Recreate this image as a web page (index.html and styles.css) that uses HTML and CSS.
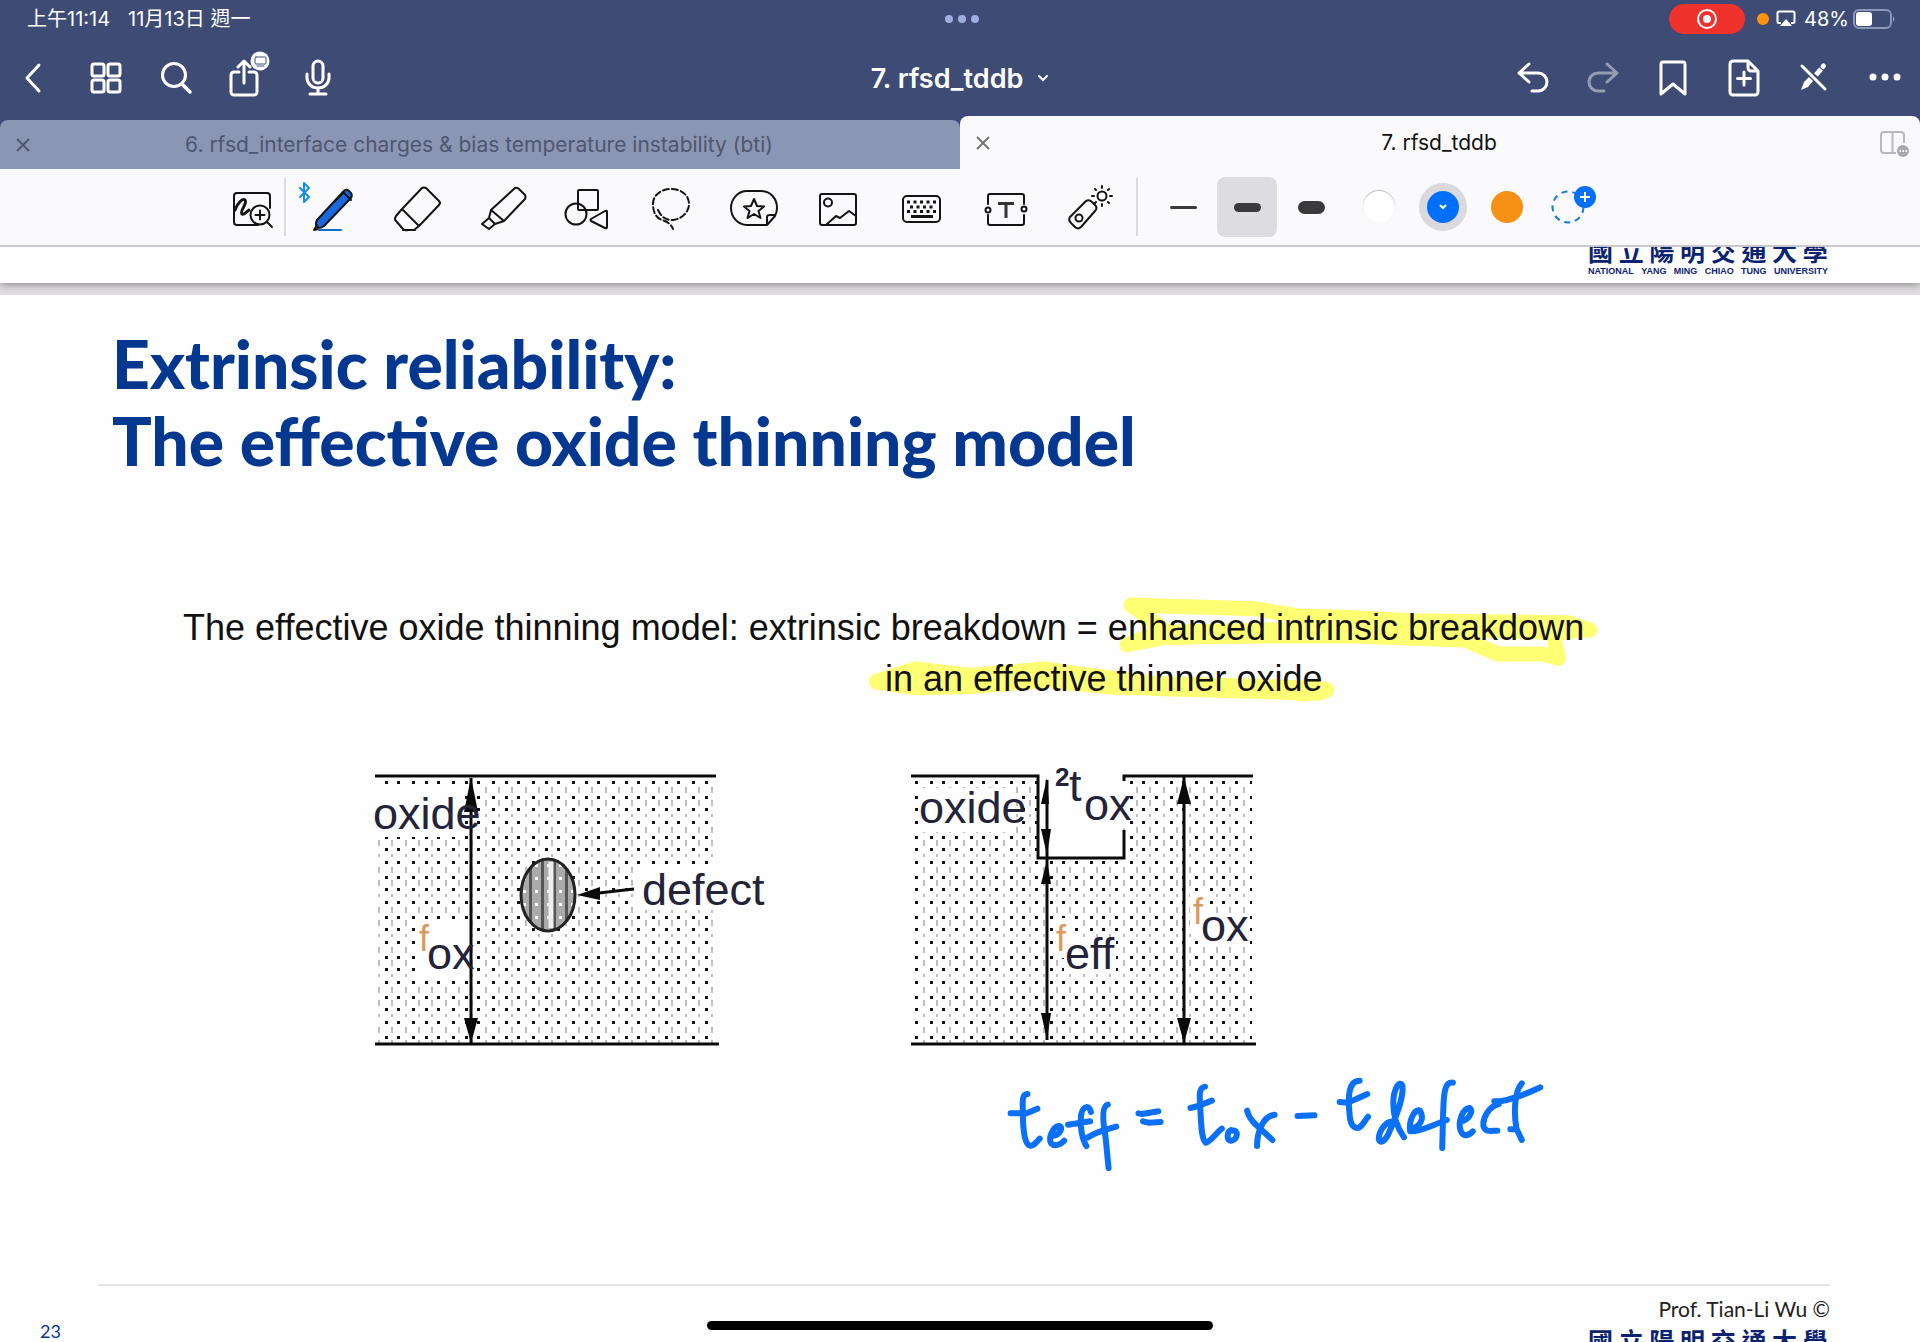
FILE: index.html
```html
<!DOCTYPE html>
<html lang="zh-Hant">
<head>
<meta charset="utf-8">
<title>7. rfsd_tddb</title>
<link rel="stylesheet" href="styles.css">
</head>
<body>
<header class="top">
  <div class="status">
    <div class="status-left"><span>上午11:14</span><span>11月13日 週一</span></div>
    <svg class="dots" width="34" height="10" viewBox="0 0 34 10" fill="#9dafe0"><circle cx="4" cy="5" r="4"/><circle cx="17" cy="5" r="4"/><circle cx="30" cy="5" r="4"/></svg>
    <div class="status-right">
      <span class="rec"><svg width="22" height="22" viewBox="0 0 22 22" fill="none" stroke="#fff" stroke-width="2"><circle cx="11" cy="11" r="9"/><circle cx="11" cy="11" r="4" fill="#fff" stroke="none"/></svg></span>
      <span class="mic-dot"></span>
      <svg width="20" height="18" viewBox="0 0 20 18"><path d="M5 13H3a1.500 1.500 0 0 1-1.500-1.500V3A1.500 1.500 0 0 1 3 1.500h14A1.500 1.500 0 0 1 18.500 3v8.500A1.500 1.500 0 0 1 17 13h-2" fill="none" stroke="#fff" stroke-width="2"/><path d="M10 9l6 7H4z" fill="#fff"/></svg>
      <span class="percent">48%</span>
      <svg width="43" height="20" viewBox="0 0 43 20"><rect x="1" y="1" width="37" height="18" rx="5" fill="none" stroke="#8d98b8" stroke-width="2"/><rect x="3" y="3" width="16" height="14" rx="3" fill="#fff"/><path d="M40 7q3 3 0 6z" fill="#8d98b8"/></svg>
    </div>
  </div>
  <nav class="nav">
    <div class="nav-group">
      <button class="nav-btn" aria-label="Back"><svg width="36" height="40" viewBox="0 0 36 40"><path d="M22 7L10 20l12 13"/></svg></button>
      <button class="nav-btn" aria-label="Pages"><svg width="36" height="40" viewBox="0 0 36 40"><rect x="5" y="6" width="12" height="12" rx="2"/><rect x="21" y="6" width="12" height="12" rx="2"/><rect x="5" y="22" width="12" height="12" rx="2"/><rect x="21" y="22" width="12" height="12" rx="2"/></svg></button>
      <button class="nav-btn" aria-label="Search"><svg width="36" height="40" viewBox="0 0 36 40"><circle cx="17" cy="17" r="11.500"/><path d="M25 26l8 8" stroke-width="3.500"/></svg></button>
      <button class="nav-btn" aria-label="Share"><svg class="share" width="36" height="40" viewBox="0 0 36 40"><path d="M12 14H7a3 3 0 0 0-3 3v17a3 3 0 0 0 3 3h20a3 3 0 0 0 3-3V17a3 3 0 0 0-3-3h-5M17 25V4M11 9l6-6 6 6"/><circle cx="33" cy="3" r="9.500" fill="#fff" stroke="none"/><rect x="28" y="-1" width="11" height="7" rx="1" stroke="#3e4c75" stroke-width="1"/><path d="M30 8h7" stroke="#3e4c75" stroke-width="1"/></svg></button>
      <button class="nav-btn" aria-label="Record"><svg width="36" height="40" viewBox="0 0 36 40"><rect x="16" y="3" width="10" height="22" rx="5"/><path d="M10 16v4a11 10 0 0 0 22 0v-4M21 30v6M13 36h16"/></svg></button>
    </div>
    <button class="doc-title"><span>7. rfsd_tddb</span><svg width="12" height="8" viewBox="0 0 12 8"><path d="M2 2l4 4 4-4" fill="none" stroke="#fff" stroke-width="2" stroke-linecap="round"/></svg></button>
    <div class="nav-group nav-end">
      <button class="nav-btn" aria-label="Undo"><svg width="36" height="40" viewBox="0 0 36 40"><path d="M12 6L2 15l10 9M3 15h18a9 9 0 0 1 0 18h-6"/></svg></button>
      <button class="nav-btn faded" aria-label="Redo"><svg width="36" height="40" viewBox="0 0 36 40"><path d="M20 6l10 9-10 9M29 15H11a9 9 0 0 0 0 18h6"/></svg></button>
      <button class="nav-btn" aria-label="Bookmark"><svg width="36" height="40" viewBox="0 0 36 40"><path d="M4 36V6a2 2 0 0 1 2-2h20a2 2 0 0 1 2 2v30L16 26z"/></svg></button>
      <button class="nav-btn" aria-label="Add page"><svg width="36" height="40" viewBox="0 0 36 40"><path d="M21 3H6a3 3 0 0 0-3 3v28a3 3 0 0 0 3 3h22a3 3 0 0 0 3-3V13zM21 3v7a3 3 0 0 0 3 3h7M17 14v13M10.500 20.500h13"/></svg></button>
      <button class="nav-btn" aria-label="Read only"><svg width="36" height="40" viewBox="0 0 36 40"><path d="M5 8l23 23"/><path d="M4 32l3-8 5-5 4 4-5 6z" fill="#fff" stroke="none"/><path d="M19 17l5-6" stroke-width="5" stroke-linecap="butt"/><path d="M26 8.500l.5-.5" stroke-width="5"/></svg></button>
      <button class="nav-btn" aria-label="More"><svg width="36" height="40" viewBox="0 0 36 40" ><g fill="#fff" stroke="none"><circle cx="6" cy="19" r="3.500"/><circle cx="18" cy="19" r="3.500"/><circle cx="30" cy="19" r="3.500"/></g></svg></button>
    </div>
  </nav>
  <div class="tabs">
    <div class="tab"><button class="close" aria-label="Close tab"><svg width="14" height="14" viewBox="0 0 14 14"><path d="M1 1l12 12M13 1L1 13"/></svg></button><span class="tab-name">6. rfsd_interface charges &amp; bias temperature instability (bti)</span></div>
    <div class="tab active"><button class="close" aria-label="Close tab"><svg width="14" height="14" viewBox="0 0 14 14"><path d="M1 1l12 12M13 1L1 13"/></svg></button><span class="tab-name">7. rfsd_tddb</span>
      <button class="split" aria-label="Split view"><svg width="30" height="26" viewBox="0 0 30 26" fill="none" stroke="#b9b8bd" stroke-width="2"><path d="M16 22H4a3 3 0 0 1-3-3V4a3 3 0 0 1 3-3h17a3 3 0 0 1 3 3v8M12.500 1v21"/><circle cx="23" cy="20" r="6" fill="#a9a8ad" stroke="none"/><path d="M19.500 20h1.500M22.500 20h1.500M25.500 20h1.500" stroke="#fff"/></svg></button></div>
  </div>
</header>
<div class="toolbar">
  <button class="tool first" aria-label="Zoom window"><svg width="48" height="48" viewBox="0 0 48 48"><path d="M30 41H9a3 3 0 0 1-3-3V12a3 3 0 0 1 3-3h30a3 3 0 0 1 3 3v12"/><path d="M7 26c3-8 8-12 10-10 3 3-6 12-3 14 3 1 4-2 7-4" stroke-width="3"/><circle cx="32" cy="31" r="9.500" fill="#faf9fc"/><path d="M39 38l5 5M32 26.500v9M27.500 31h9"/></svg></button>
  <span class="sep"></span>
  <button class="tool" aria-label="Pen"><svg width="48" height="48" viewBox="0 0 48 48"><path d="M-10 4l9 9-5 5V-1l5 5-9 9" stroke="#148cf0"/><path d="M7 36L33 8q3-4 6-1l2 2q2 3-1 6L14 42q-4 3-7 1-2-3 0-7z" fill="#1a67e0" stroke-width="2"/><path d="M33 8l8 8" /><path d="M24 18l9-9M7 41l-3 5 4-1" /><path d="M9 46h22" stroke="#0a72cc"/></svg></button>
  <button class="tool" aria-label="Eraser"><svg width="48" height="48" viewBox="0 0 48 48"><path d="M8 25L28 4q2-1 4 0l13 13q2 2 0 4L25 42zM8 25l-6 7q-2 3 0 5l7 8q2 2 5 1h6l5-4M9 46h12"/></svg></button>
  <button class="tool" aria-label="Highlighter"><svg width="48" height="48" viewBox="0 0 48 48"><path d="M13 26L37 4q2-1 4 1l6 6q1 2 0 4L26 37zM13 26l-2 8 6 6 9-3M11 34l-7 6 7 5 6-5"/></svg></button>
  <button class="tool" aria-label="Shapes"><svg width="48" height="48" viewBox="0 0 48 48"><rect x="16" y="6" width="20" height="20" rx="1"/><circle cx="14" cy="30" r="10.500"/><path d="M43 27q2-1 2 1v15q0 2-2 1L29 37q-1-1 0-2z"/></svg></button>
  <button class="tool" aria-label="Lasso"><svg width="48" height="48" viewBox="0 0 48 48"><path d="M12 26c4 8 8 10 15 10 9-1 16-8 16-16 0-9-8-15-18-15S7 11 7 20c0 8 3 14 9 16 6 2 9 4 11 9" stroke-dasharray="6 3"/></svg></button>
  <button class="tool" aria-label="Stickers"><svg width="48" height="48" viewBox="0 0 48 48"><path d="M37 41H17C8 41 1 33 1 24S8 7 17 7h14c9 0 16 7 16 17 0 4-1 6-2 8l-8 9v-8q0-2 3-2h5"/><path d="M24 15l3 7 7 .5-5.500 4.500 2 7-6.500-4-6.500 4 2-7-5.500-4.500 7-.5z"/></svg></button>
  <button class="tool" aria-label="Image"><svg width="48" height="48" viewBox="0 0 48 48"><rect x="6" y="10" width="36" height="31" rx="2"/><circle cx="14" cy="18.500" r="4"/><path d="M12 41l10-9 4 2 9-7 7 5"/></svg></button>
  <button class="tool" aria-label="Keyboard"><svg width="48" height="48" viewBox="0 0 48 48"><rect x="5" y="12" width="37" height="26" rx="4"/><path d="M9 18h29M9 27.500h29" stroke-width="3" stroke-dasharray="3 3.500" stroke-linecap="butt"/><path d="M12 23h24" stroke-width="3" stroke-dasharray="3 3.500" stroke-linecap="butt"/><path d="M13 32.500h22" stroke-width="3" stroke-linecap="butt"/></svg></button>
  <button class="tool" aria-label="Text"><svg width="48" height="48" viewBox="0 0 48 48"><path d="M6 20v-8q0-2 2-2h32q2 0 2 2v8M6 31v8q0 2 2 2h32q2 0 2-2v-8"/><circle cx="6" cy="26" r="2.500"/><circle cx="42" cy="25" r="2.500"/><path d="M16 19.500h16M24 20v14" stroke-width="3" stroke="#333" stroke-linecap="butt"/></svg></button>
  <button class="tool" aria-label="Laser pointer"><svg width="48" height="48" viewBox="0 0 48 48"><path d="M4 33L20 17q3-2 6 1l3 3q3 3 0 6L15 43q-3 3-6 0l-4-4q-3-3-1-6z"/><circle cx="13" cy="34" r="3.500"/><circle cx="36" cy="12" r="4.500"/><path d="M36 2v2M36 20v2M26 12h2M44 12h2M29 5l1 1M42 18l1 1M43 5l-1 1M30 18l-2 2"/></svg></button>
  <span class="sep second"></span>
  <div class="pens">
    <button class="pen" aria-label="Thin"><span class="stroke thin"></span></button>
    <button class="pen selected" aria-label="Medium"><span class="stroke medium"></span></button>
    <button class="pen" aria-label="Thick"><span class="stroke thick"></span></button>
  </div>
  <div class="colors">
    <button class="pen" aria-label="White"><span class="swatch white"></span></button>
    <button class="pen" aria-label="Blue"><span class="swatch blue"><svg width="10" height="8" viewBox="0 0 10 8"><path d="M2 2l3 3 3-3" fill="none" stroke="#fff" stroke-width="2"/></svg></span></button>
    <button class="pen" aria-label="Orange"><span class="swatch orange"></span></button>
    <button class="pen" aria-label="Add colour"><svg width="50" height="50" viewBox="0 0 50 50" fill="none"><circle cx="22" cy="25" r="15.500" stroke="#0f78dc" stroke-width="2" stroke-dasharray="6 5"/><circle cx="39" cy="15" r="11" fill="#006ffd"/><path d="M39 10v10M34 15h10" stroke="#fff" stroke-width="2"/></svg></button>
  </div>
</div>
<main class="canvas">
  <div class="previous">
    <div class="logo"><span class="logo-zh">國 立 陽 明 交 通 大 學</span><span class="logo-en"><span>NATIONAL</span><span>YANG</span><span>MING</span><span>CHIAO</span><span>TUNG</span><span>UNIVERSITY</span></span></div>
  </div>
  <article class="slide">
    <h1>Extrinsic reliability:<br>The effective oxide thinning model</h1>
    <div class="statement">
      <svg class="marker" width="780" height="130" viewBox="0 0 1568 390" preserveAspectRatio="none" fill="none" stroke="#ffff73" stroke-linecap="round" stroke-linejoin="round">
        <path vector-effect="non-scaling-stroke" stroke-width="15" d="M553 75L800 86L890 108L980 112L1120 122L1430 128L1475 150L1400 155L1412 235L1380 222L1290 222L1225 180L1000 168L820 168L620 172L545 194L620 150L553 75"/>
        <path vector-effect="non-scaling-stroke" stroke-width="20" d="M600 165L900 155M880 130L1430 150M960 145L1220 165"/>
        <path vector-effect="non-scaling-stroke" stroke-width="16" d="M42 305L120 268L230 288L380 268L520 300L640 322L945 330L900 340L820 325L520 320L380 300L230 318L120 322L42 305"/>
        <path vector-effect="non-scaling-stroke" stroke-width="20" d="M120 300L420 285L600 318L930 332"/>
      </svg>
      <p>The effective oxide thinning model: extrinsic breakdown = enhanced intrinsic breakdown</p>
      <p class="second-line">in an effective thinner oxide</p>
    </div>
    <div class="figures">
      <svg width="420" height="300" viewBox="360 760 420 300" class="figure" role="img" aria-label="Oxide with a defect">
        <defs>
          <pattern id="d1" x="377" y="780" width="40" height="40" patternUnits="userSpaceOnUse"><g fill="#111"><path d="M8 1h3v3h-3zM20 1h3v3h-3zM35 1h3v3h-3zM8 16h3v3h-3zM20 16h3v3h-3zM35 16h3v3h-3zM8 28h3v3h-3zM20 28h3v3h-3zM35 28h3v3h-3z"/></g><g fill="#bdbdbd"><path d="M1 7h2v6h-2zM14 7h2v6h-2zM28 7h2v6h-2zM1 20h2v6h-2zM14 20h2v6h-2zM28 20h2v6h-2zM1 34h2v3h-2zM14 34h2v3h-2zM28 34h2v3h-2z"/></g></pattern>
          <pattern id="stripe" x="520" y="860" width="12" height="13" patternUnits="userSpaceOnUse"><rect width="12" height="13" fill="#aaa"/><rect x="9" width="3" height="13" fill="#555"/><rect x="3" y="4" width="3" height="3" fill="#fff"/></pattern>
        </defs>
        <rect x="377" y="779" width="337" height="264" fill="url(#d1)"/>
        <path class="blank" d="M374 787h90v50h-90zM415 920h54v58h-54zM636 865h84v45h-84z"/>
        <path class="rule" d="M375 776h341M375 1044h344M471 778v265"/>
        <path class="head" d="M471 777l7 35h-14zM471 1043l7-25h-14z"/>
        <ellipse cx="548" cy="895" rx="27" ry="36" fill="url(#stripe)" stroke="#222" stroke-width="3"/><path d="M551 862v66" stroke="#eee" stroke-width="5"/>
        <path class="rule" d="M590 894l44-5"/><path class="head" d="M577 895l23-8v13z"/>
        <text x="373" y="829">oxide</text><text x="642" y="905">defect</text><text x="427" y="969">ox</text><text class="tiny" x="419" y="951">f</text>
      </svg>
      <svg width="400" height="300" viewBox="890 760 400 300" class="figure" role="img" aria-label="Equivalent thinner oxide">
        <defs><pattern id="d2" x="922" y="780" width="40" height="40" patternUnits="userSpaceOnUse"><g fill="#111"><path d="M8 1h3v3h-3zM20 1h3v3h-3zM33 1h3v3h-3zM8 16h3v3h-3zM20 16h3v3h-3zM33 16h3v3h-3zM8 28h3v3h-3zM20 28h3v3h-3zM33 28h3v3h-3z"/></g><g fill="#bdbdbd"><path d="M1 7h2v6h-2zM14 7h2v6h-2zM27 7h2v6h-2zM1 20h2v6h-2zM14 20h2v6h-2zM27 20h2v6h-2zM1 34h2v3h-2zM14 34h2v3h-2zM27 34h2v3h-2z"/></g></pattern></defs>
        <rect x="913" y="779" width="339" height="264" fill="url(#d2)"/>
        <path class="blank" d="M919 788h94v44h-94zM1039 760h84v98h-84zM1110 782h18v46h-18zM1053 918h20v40h-20zM1064 938h52v34h-52zM1190 894h20v40h-20zM1200 914h46v32h-46z"/>
        <path class="rule" d="M911 776h127v82h86v-28M1124 781v-5h129M911 1044h345M1047 780v260M1184 777v266"/>
        <path class="head" d="M1047 778l2 26h-8zM1047 855l4-26h-10zM1047 860l4 24h-10zM1047 1040l4-27h-10zM1184 777l7 27h-14zM1184 1043l7-25h-14z"/>
        <text x="919" y="823">oxide</text><text class="two" x="1055" y="786">2</text><text x="1069" y="801">t</text><text x="1084" y="820">ox</text><text x="1065" y="969">eff</text><text x="1201" y="941">ox</text><text class="tiny" x="1056" y="951">f</text><text class="tiny" x="1193" y="924">f</text>
      </svg>
    </div>
    <svg class="ink" width="600" height="130" viewBox="0 0 1568 390" preserveAspectRatio="none" role="img" aria-label="t eff = t ox − t defect">
      <path d="M124 102C108 104 112 125 112 160C112 215 118 250 128 256C140 262 148 245 156 236M80 160L122 160L150 146"/>
      <path d="M190 228C212 224 218 198 206 198C190 200 178 235 186 250C196 262 212 252 220 242M290 156C286 136 270 134 264 165C260 200 268 240 278 258M230 194L288 184M334 134C318 138 320 180 328 230L336 324M282 232C310 212 334 208 356 200"/>
      <path d="M414 160L424 162L466 154M426 184L440 188L472 186M588 80C570 84 574 105 576 150C578 205 580 240 590 248C602 246 616 220 632 206M550 144L570 138L606 122"/>
      <path d="M656 210C644 216 644 246 658 242C674 238 676 208 660 212M698 152C704 185 734 205 764 240M770 164C742 168 724 210 724 258M830 168L874 166"/>
      <path d="M992 62C960 62 962 120 966 165C968 205 985 206 992 202C1002 194 1006 180 1014 170M940 126L960 128L982 118L1012 102"/>
      <path d="M1084 190C1068 172 1042 210 1042 238C1046 252 1058 244 1068 220C1084 180 1108 110 1104 78C1096 56 1080 90 1080 130C1080 180 1098 216 1108 232M1126 206C1150 202 1162 176 1150 152C1136 146 1120 180 1124 214C1150 216 1180 196 1220 180M1236 68C1210 62 1212 120 1210 170L1208 264"/>
      <path d="M1256 184C1276 182 1290 155 1280 144C1262 144 1248 185 1256 212C1264 232 1276 228 1288 214M1362 124L1344 124M1356 132C1332 138 1312 172 1316 200C1322 218 1336 212 1352 212M1350 126C1390 120 1425 102 1464 82M1416 70C1394 96 1396 170 1402 206L1416 240M1398 208L1386 208"/>
    </svg>
    <footer class="foot">
      <span class="page-no">23</span>
      <div class="credit"><span class="author">Prof. Tian-Li Wu ©</span><span class="logo-zh">國 立 陽 明 交 通 大 學</span></div>
    </footer>
  </article>
</main>
<div class="home"></div>
</body>
</html>
```

FILE: styles.css
```css
* { box-sizing: border-box; }
body { margin: 0; height: 100vh; overflow: hidden; display: flex; flex-direction: column; background: #fefefe; font-family: Inter, "Noto Sans CJK TC", sans-serif; }
button { border: 0; padding: 0; background: none; font: inherit; color: inherit; }
svg { display: block; overflow: visible; flex: none; }
.top { background: #3e4c75; color: #fff; flex: none; }
.status { height: 40px; display: grid; grid-template-columns: 1fr auto 1fr; align-items: center; font-size: 20px; line-height: 24px; padding: 0 24px 2px 27px; }
.status-left { display: flex; gap: 18px; }
.status-right { display: flex; justify-content: flex-end; align-items: center; }
.rec { width: 76px; height: 30px; border-radius: 15px; background: #f0322d; display: grid; place-items: center; }
.mic-dot { width: 12px; height: 12px; border-radius: 50%; background: #ff930f; margin: 0 7px 0 12px; }
.percent { margin: 0 4px 0 8px; }
.nav { height: 76px; display: grid; grid-template-columns: 1fr auto 1fr; align-items: center; }
.nav-group { display: flex; }
.nav-end { justify-content: flex-end; }
.nav-btn { width: 70px; height: 60px; display: grid; place-items: center; }
.nav-btn svg { fill: none; stroke: #fff; stroke-width: 3; stroke-linecap: round; stroke-linejoin: round; }
.faded { opacity: .45; }
.doc-title { display: flex; align-items: center; gap: 14px; font-size: 27px; font-weight: 600; }
.tabs { display: flex; align-items: flex-end; height: 53px; }
.tab { flex: 1; height: 49px; display: flex; align-items: center; padding: 0 16px; background: #8b95b4; border-radius: 8px 8px 0 0; color: #50576f; font-size: 21px; position: relative; }
.tab.active { height: 53px; background: #faf9fc; color: #111; }
.tab-name { flex: 1; text-align: center; padding-right: 16px; }
.close svg { stroke: currentColor; stroke-width: 2; fill: none; }
.active .close { color: #77767b; }
.split { position: absolute; right: 10px; top: 15px; }
.toolbar { height: 78px; flex: none; display: flex; align-items: center; background: #faf9fc; border-bottom: 2px solid #c9c8cc; padding-left: 222px; }
.tool { width: 84px; height: 60px; padding-top: 2px; display: grid; place-items: center; flex: none; }
.tool.first { width: 60px; }
.tool svg { fill: none; stroke: #141414; stroke-width: 2; stroke-linecap: round; stroke-linejoin: round; }
.sep { width: 2px; height: 58px; background: #dcdbdf; margin: 0 6px 0 2px; }
.sep.second { margin: 0 15px 0 4px; }
.pens, .colors { display: flex; gap: 4px; }
.colors { margin-left: 8px; }
.pen { width: 60px; height: 60px; border-radius: 8px; display: grid; place-items: center; }
.selected { background: #dddce1; }
.stroke { width: 27px; border-radius: 7px; background: #3a393c; }
.thin { height: 3px; }
.medium { height: 9px; }
.thick { height: 13px; }
.swatch { width: 32px; height: 32px; border-radius: 50%; display: grid; place-items: center; }
.white { background: #fff; box-shadow: 0 -1px 1px #bbb; }
.blue { background: #006ffd; box-shadow: 0 0 0 8px #dad9de; }
.orange { background: #f79115; }
.canvas { flex: 1; min-height: 0; overflow: hidden; background: #e2e0e2; }
.previous { height: 36px; background: #fefefe; box-shadow: 0 2px 8px #8a888c; display: flex; justify-content: flex-end; align-items: flex-end; padding: 0 92px 5px 0; overflow: hidden; clip-path: inset(0 0 -12px 0); }
.logo { display: flex; flex-direction: column; width: 240px; }
.logo-zh { width: 242px; font: 700 25px/28px "Noto Sans CJK TC", sans-serif; color: #0c2370; white-space: nowrap; }
.logo-en { display: flex; justify-content: space-between; font: 700 9px/14px "Liberation Sans", sans-serif; color: #0c2370; }
.slide { margin-top: 12px; background: #fefefe; height: 100%; padding-top: 30px; }
h1 { margin: 0 0 123px 112px; font: 900 66px/77px Lato, sans-serif; color: #04378f; }
.statement { position: relative; margin-left: 183px; font: 36px/51px "Liberation Sans", sans-serif; color: #111; white-space: nowrap; }
.statement p { margin: 0; position: relative; }
.statement .second-line { margin-left: 702px; }
.marker { position: absolute; left: 673px; top: -22px; }
.figures { display: flex; gap: 110px; margin: 56px 0 0 360px; }
.figure text { font: 45px "Liberation Sans", sans-serif; fill: #23233a; }
.figure .tiny { font-size: 36px; fill: #d99a5b; }
.figure .two { font-size: 26px; font-weight: 700; }
.blank { fill: #fefefe; }
.rule { fill: none; stroke: #0a0a0a; stroke-width: 3; }
.head { fill: #0a0a0a; }
.ink { margin-left: 980px; fill: none; stroke: #0a70f8; stroke-linecap: round; stroke-linejoin: round; }
.ink path { stroke-width: 6px; vector-effect: non-scaling-stroke; }
.foot { margin: 94px 90px 0 98px; border-top: 2px solid #e4e3e6; display: flex; justify-content: space-between; }
.page-no { margin: 33px 0 0 -58px; font: 18px/24px Lato, sans-serif; color: #04378f; }
.credit { display: flex; flex-direction: column; align-items: flex-end; width: 242px; padding-top: 9px; }
.author { font: 21px/28px Lato, sans-serif; color: #222; }
.credit .logo-zh { margin-top: 3px; }
.home { position: fixed; bottom: 12px; left: 50%; width: 506px; height: 9px; margin-left: -253px; border-radius: 5px; background: #000; }
```
